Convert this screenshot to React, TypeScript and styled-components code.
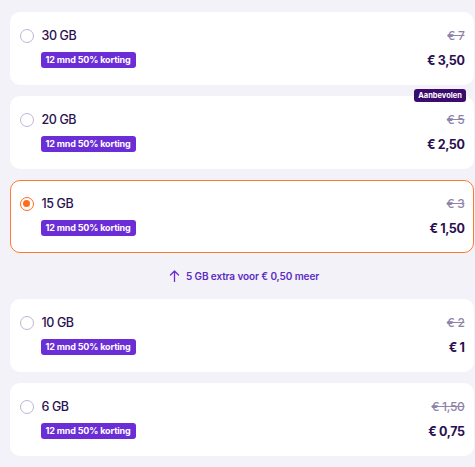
import React from "react";
import styled, { createGlobalStyle, css } from "styled-components";

const Global = createGlobalStyle`
  html, body { margin: 0; padding: 0; background: #f3f2f8; }
  body { font-family: Inter, "Noto Sans", sans-serif; -webkit-font-smoothing: antialiased; }
`;

const Page = styled.div`
  display: flex;
  flex-direction: column;
  padding: 12px 1px 0 10px;
  width: 475px;
  box-sizing: border-box;
`;

const Card = styled.div<{ $selected?: boolean }>`
  position: relative;
  height: 73px;
  box-sizing: border-box;
  background: #fff;
  border-radius: 10px;
  border: 1.5px solid transparent;
  padding: 13.5px 8.5px 0 8.5px;
  display: flex;
  justify-content: space-between;
  margin-bottom: 11px;
  ${(p) =>
    p.$selected &&
    css`
      border-color: #ff7a30;
      margin-bottom: 0;
    `}
`;

const Left = styled.div`
  display: flex;
  flex-direction: column;
`;

const TopLine = styled.div`
  display: flex;
  align-items: center;
  height: 18px;
  gap: 8px;
`;

const Radio = styled.span<{ $checked?: boolean }>`
  width: 14px;
  height: 14px;
  box-sizing: border-box;
  border-radius: 50%;
  border: 1.5px solid ${(p) => (p.$checked ? "#ff6b1f" : "#bdb5d6")};
  display: flex;
  align-items: center;
  justify-content: center;
  &::after {
    content: "";
    display: ${(p) => (p.$checked ? "block" : "none")};
    width: 7px;
    height: 7px;
    border-radius: 50%;
    background: #ff6b1f;
  }
`;

const Title = styled.span`
  font-size: 12.5px;
  font-weight: 500;
  color: #2a1250;
  letter-spacing: -0.4px;
`;

const Discount = styled.span`
  align-self: flex-start;
  margin-top: 7px;
  margin-left: 21px;
  height: 16px;
  padding: 0 5px;
  display: flex;
  align-items: center;
  background: #6b2dd6;
  color: #fff;
  border-radius: 3px;
  font-size: 9px;
  font-weight: 700;
  letter-spacing: -0.15px;
`;

const Right = styled.div`
  display: flex;
  flex-direction: column;
  align-items: flex-end;
`;

const OldPrice = styled.span`
  height: 18px;
  line-height: 18px;
  font-size: 12px;
  font-weight: 500;
  color: #8e84a8;
  letter-spacing: -0.3px;
  text-decoration: line-through;
`;

const NewPrice = styled.span`
  margin-top: 7px;
  height: 18px;
  line-height: 18px;
  font-size: 12.5px;
  font-weight: 700;
  color: #2a0e52;
  letter-spacing: -0.4px;
`;

const Recommended = styled.span`
  position: absolute;
  top: -8px;
  right: 7px;
  height: 13px;
  padding: 0 4px;
  background: #3b0b6d;
  color: #fff;
  border-radius: 3px;
  font-size: 7.5px;
  font-weight: 700;
  display: flex;
  align-items: center;
`;

const Upsell = styled.div`
  height: 46px;
  display: flex;
  align-items: center;
  justify-content: center;
  gap: 6px;
  padding-left: 4px;
  color: #5b2bc4;
  font-size: 10px;
  font-weight: 600;
  letter-spacing: -0.1px;
`;

type Plan = {
  gb: string;
  old: string;
  price: string;
  selected?: boolean;
  recommended?: boolean;
};

const plans: Plan[] = [
  { gb: "30 GB", old: "€ 7", price: "€ 3,50" },
  { gb: "20 GB", old: "€ 5", price: "€ 2,50", recommended: true },
  { gb: "15 GB", old: "€ 3", price: "€ 1,50", selected: true },
  { gb: "10 GB", old: "€ 2", price: "€ 1" },
  { gb: "6 GB", old: "€ 1,50", price: "€ 0,75" },
];

const ArrowUp = () => (
  <svg width="11" height="12" viewBox="0 0 11 12" fill="none">
    <path d="M5.5 11.5V1M1.5 5L5.5 1L9.5 5" stroke="#6b2dd6" strokeWidth="1.3" strokeLinecap="round" strokeLinejoin="round" />
  </svg>
);

export default function App() {
  return (
    <>
      <Global />
      <Page>
        {plans.map((p) => (
          <React.Fragment key={p.gb}>
            <Card $selected={p.selected}>
              {p.recommended && <Recommended>Aanbevolen</Recommended>}
              <Left>
                <TopLine>
                  <Radio $checked={p.selected} />
                  <Title>{p.gb}</Title>
                </TopLine>
                <Discount>12 mnd 50% korting</Discount>
              </Left>
              <Right>
                <OldPrice>{p.old}</OldPrice>
                <NewPrice>{p.price}</NewPrice>
              </Right>
            </Card>
            {p.selected && (
              <Upsell>
                <ArrowUp />
                <span>5 GB extra voor € 0,50 meer</span>
              </Upsell>
            )}
          </React.Fragment>
        ))}
      </Page>
    </>
  );
}
